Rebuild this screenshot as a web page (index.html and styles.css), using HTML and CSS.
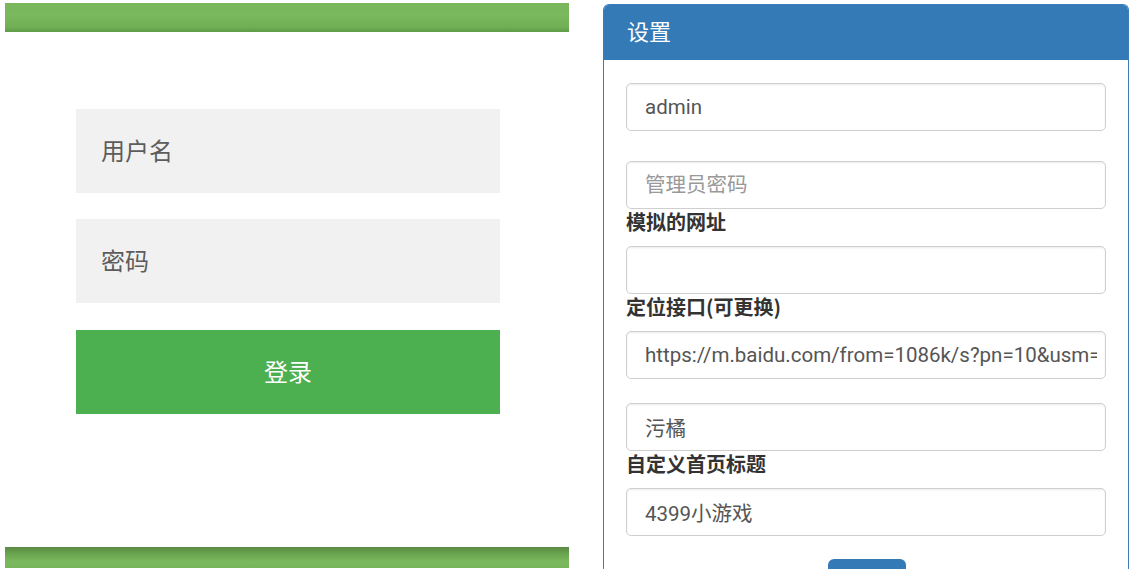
FILE: index.html
```html
<!DOCTYPE html>
<html lang="zh-CN">
<head>
  <meta charset="UTF-8">
  <meta name="viewport" content="width=device-width, initial-scale=1.0">
  <title>登录 / 设置</title>
  <link rel="stylesheet" href="styles.css">
</head>
<body>

  <div class="page">
    <!-- left: login screen -->
    <div class="login">
      <div class="bar bar-top"></div>
      <form class="login-form">
        <input type="text" class="login-input" placeholder="用户名">
        <input type="password" class="login-input" placeholder="密码">
        <button type="button" class="login-btn">登录</button>
      </form>
      <div class="bar bar-bottom"></div>
    </div>

    <!-- right: settings panel -->
    <div class="panel">
      <div class="panel-heading">设置</div>
      <div class="panel-body">
        <input type="text" class="field" value="admin">
        <input type="password" class="field gap-lg" placeholder="管理员密码">
        <label class="field-label">模拟的网址</label>
        <input type="text" class="field">
        <label class="field-label">定位接口(可更换)</label>
        <input type="text" class="field" value="https://m.baidu.com/from=1086k/s?pn=10&amp;usm=">
        <input type="text" class="field gap-md" value="污橘">
        <label class="field-label">自定义首页标题</label>
        <input type="text" class="field" value="4399小游戏">
        <div class="actions">
          <button type="button" class="save-btn" aria-label="保存"></button>
        </div>
      </div>
    </div>
  </div>

</body>
</html>
```

FILE: styles.css
```css
html, body {
  margin: 0;
  background: #fff;
  height: 100%;
  overflow: hidden;
}
body {
  font-family: Roboto, "Noto Sans CJK SC", sans-serif;
  color: #333;
}
.page {
  display: flex;
  gap: 34px;
  padding: 3px 0 0 5px;
}

/* login side */
.login {
  width: 564px;
  height: 565px;
  display: flex;
  flex-direction: column;
}
.bar {
  flex: none;
}
.bar-top {
  height: 29px;
  background: linear-gradient(to bottom, #79b65c 0%, #7ab95e 40%, #6fae52 85%, #5f9a48 100%);
}
.bar-bottom {
  height: 21px;
  margin-top: auto;
  background: linear-gradient(to bottom, #5a8a43 0%, #6aa650 35%, #7bb95d 70%, #76b55a 100%);
}
.login-form {
  display: flex;
  flex-direction: column;
  gap: 26px;
  width: 424px;
  margin: 77px 0 0 71px;
}
.login-input {
  height: 84px;
  box-sizing: border-box;
  border: none;
  background: #f1f1f1;
  padding: 0 25px 3px 25px;
  font-family: "Noto Sans CJK SC", sans-serif;
  font-size: 24px;
  color: #555;
  outline: none;
}
.login-input::placeholder {
  color: #5c5c5c;
}
.login-btn {
  height: 84px;
  margin-top: 1px;
  border: none;
  background: #4caf50;
  color: #fff;
  font-family: "Noto Sans CJK SC", sans-serif;
  font-size: 24px;
  padding: 0 0 4px 0;
}

/* settings panel */
.panel {
  width: 526px;
  height: 565px;
  box-sizing: border-box;
  margin-top: 1px;
  border: 1px solid #3a7db8;
  border-bottom: none;
  border-radius: 6px 6px 0 0;
  overflow: hidden;
}
.panel-heading {
  height: 55px;
  background: #337ab7;
  color: #fff;
  font-family: "Noto Sans CJK SC", sans-serif;
  font-size: 22px;
  line-height: 50px;
  padding-left: 23px;
}
.panel-body {
  display: flex;
  flex-direction: column;
  padding: 23px 22px 0 22px;
}
.field {
  flex: none;
  height: 48px;
  box-sizing: border-box;
  border: 1px solid #cfcfcf;
  border-radius: 5px;
  box-shadow: inset 0 1px 2px rgba(0, 0, 0, 0.08);
  padding: 0 8px 0 18px;
  font-family: Roboto, "Noto Sans CJK SC", sans-serif;
  font-size: 20.5px;
  color: #555;
  background: #fff;
  outline: none;
}
.field::placeholder {
  color: #999;
}
.gap-lg {
  margin-top: 30px;
}
.gap-md {
  margin-top: 24px;
}
.field-label {
  display: block;
  flex: none;
  height: 28px;
  overflow: visible;
  font-family: "Noto Sans CJK SC", sans-serif;
  font-weight: bold;
  font-size: 20px;
  line-height: 26px;
  margin-bottom: 9px;
  color: #333;
}
.actions {
  display: flex;
  justify-content: center;
  margin-top: 23px;
}
.save-btn {
  width: 78px;
  height: 40px;
  border: none;
  border-radius: 6px;
  background: #337ab7;
  margin-left: 2px;
}
```
